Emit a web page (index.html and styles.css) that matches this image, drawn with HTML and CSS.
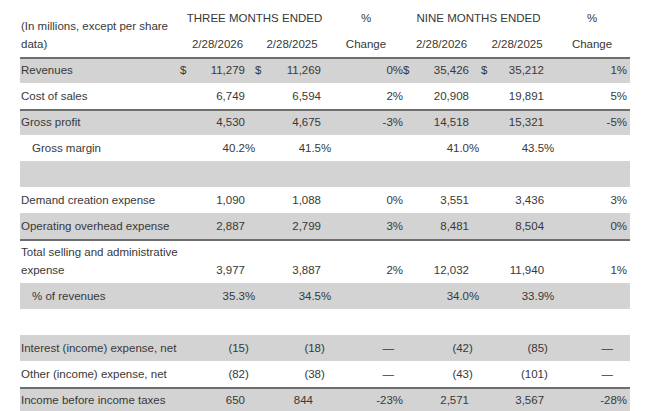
FILE: index.html
```html
<!DOCTYPE html>
<html>
<head>
<meta charset="utf-8">
<link rel="stylesheet" href="styles.css">
</head>
<body>
<table class="fin">
  <colgroup>
    <col class="w-label"><col class="w-t1"><col class="w-t2"><col class="w-c1"><col class="w-n1"><col class="w-n2"><col class="w-c2">
  </colgroup>
  <thead>
    <tr class="h1">
      <th class="lab" rowspan="2">(In millions, except per share data)</th>
      <th colspan="2">THREE MONTHS ENDED</th>
      <th>%</th>
      <th colspan="2">NINE MONTHS ENDED</th>
      <th>%</th>
    </tr>
    <tr class="h2">
      <th>2/28/2026</th>
      <th>2/28/2025</th>
      <th>Change</th>
      <th>2/28/2026</th>
      <th>2/28/2025</th>
      <th>Change</th>
    </tr>
  </thead>
  <tbody>
    <tr class="gray rule">
      <td class="lab">Revenues</td>
      <td class="t1"><span class="cur">$</span>11,279</td>
      <td class="t2"><span class="cur">$</span>11,269</td>
      <td class="c1">0%</td>
      <td class="n1"><span class="cur">$</span>35,426</td>
      <td class="n2"><span class="cur">$</span>35,212</td>
      <td class="c2">1%</td>
    </tr>
    <tr>
      <td class="lab">Cost of sales</td>
      <td class="t1">6,749</td>
      <td class="t2">6,594</td>
      <td class="c1">2%</td>
      <td class="n1">20,908</td>
      <td class="n2">19,891</td>
      <td class="c2">5%</td>
    </tr>
    <tr class="gray rule">
      <td class="lab">Gross profit</td>
      <td class="t1">4,530</td>
      <td class="t2">4,675</td>
      <td class="c1">-3%</td>
      <td class="n1">14,518</td>
      <td class="n2">15,321</td>
      <td class="c2">-5%</td>
    </tr>
    <tr>
      <td class="lab sub">Gross margin</td>
      <td class="t1">40.2<span class="hang">%</span></td>
      <td class="t2">41.5<span class="hang">%</span></td>
      <td class="c1"></td>
      <td class="n1">41.0<span class="hang">%</span></td>
      <td class="n2">43.5<span class="hang">%</span></td>
      <td class="c2"></td>
    </tr>
    <tr class="gray">
      <td class="lab">&nbsp;</td>
      <td class="t1"></td><td class="t2"></td><td class="c1"></td><td class="n1"></td><td class="n2"></td><td class="c2"></td>
    </tr>
    <tr>
      <td class="lab">Demand creation expense</td>
      <td class="t1">1,090</td>
      <td class="t2">1,088</td>
      <td class="c1">0%</td>
      <td class="n1">3,551</td>
      <td class="n2">3,436</td>
      <td class="c2">3%</td>
    </tr>
    <tr class="gray">
      <td class="lab">Operating overhead expense</td>
      <td class="t1">2,887</td>
      <td class="t2">2,799</td>
      <td class="c1">3%</td>
      <td class="n1">8,481</td>
      <td class="n2">8,504</td>
      <td class="c2">0%</td>
    </tr>
    <tr class="rule">
      <td class="lab">Total selling and administrative expense</td>
      <td class="t1">3,977</td>
      <td class="t2">3,887</td>
      <td class="c1">2%</td>
      <td class="n1">12,032</td>
      <td class="n2">11,940</td>
      <td class="c2">1%</td>
    </tr>
    <tr class="gray">
      <td class="lab sub">% of revenues</td>
      <td class="t1">35.3<span class="hang">%</span></td>
      <td class="t2">34.5<span class="hang">%</span></td>
      <td class="c1"></td>
      <td class="n1">34.0<span class="hang">%</span></td>
      <td class="n2">33.9<span class="hang">%</span></td>
      <td class="c2"></td>
    </tr>
    <tr>
      <td class="lab">&nbsp;</td>
      <td class="t1"></td><td class="t2"></td><td class="c1"></td><td class="n1"></td><td class="n2"></td><td class="c2"></td>
    </tr>
    <tr class="gray">
      <td class="lab">Interest (income) expense, net</td>
      <td class="t1">(15<span class="hang">)</span></td>
      <td class="t2">(18<span class="hang">)</span></td>
      <td class="c1 dash">—</td>
      <td class="n1">(42<span class="hang">)</span></td>
      <td class="n2">(85<span class="hang">)</span></td>
      <td class="c2 dash">—</td>
    </tr>
    <tr>
      <td class="lab">Other (income) expense, net</td>
      <td class="t1">(82<span class="hang">)</span></td>
      <td class="t2">(38<span class="hang">)</span></td>
      <td class="c1 dash">—</td>
      <td class="n1">(43<span class="hang">)</span></td>
      <td class="n2">(101<span class="hang">)</span></td>
      <td class="c2 dash">—</td>
    </tr>
    <tr class="gray rule">
      <td class="lab">Income before income taxes</td>
      <td class="t1">650</td>
      <td class="t2 inset">844</td>
      <td class="c1">-23%</td>
      <td class="n1">2,571</td>
      <td class="n2">3,567</td>
      <td class="c2">-28%</td>
    </tr>
  </tbody>
</table>
</body>
</html>
```
FILE: styles.css
```css
html, body {
  margin: 0;
  padding: 0;
  background: #ffffff;
}

body {
  font-family: "Liberation Sans", Arial, sans-serif;
  font-size: 11.5px;
  color: #383838;
}

.fin {
  margin-left: 20px;
  width: 610px;
  table-layout: fixed;
  border-collapse: separate;
  border-spacing: 0;
}

.w-label { width: 160px; }
.w-t1 { width: 75px; }
.w-t2 { width: 74px; }
.w-c1 { width: 74px; }
.w-n1 { width: 77px; }
.w-n2 { width: 74px; }
.w-c2 { width: 76px; }

th, td {
  line-height: 18px;
  padding: 4px 0;
  white-space: nowrap;
  vertical-align: bottom;
}

th {
  font-weight: normal;
  text-align: center;
}

.h1 th {
  padding-top: 9px;
}

.h1 th.lab, td.lab {
  text-align: left;
  white-space: normal;
  padding-left: 1px;
}

.gray td {
  background: #d3d3d3;
}

.rule td {
  border-top: 2px solid #6e6e6e;
  padding-top: 2px;
}

.sub {
  padding-left: 12px !important;
}

.t1, .t2, .c1, .n1, .n2, .c2 {
  text-align: right;
}

.t1 { padding-right: 10px; }
.t2 { padding-right: 8px; }
.c1 { padding-right: 0; }
.n1 { padding-right: 11px; }
.n2 { padding-right: 10px; }
.c2 { padding-right: 3px; }

.t2.inset { padding-right: 16px; }

.c1.dash { padding-right: 9px; }
.c2.dash { padding-right: 17px; }

.cur {
  float: left;
}

.n2 .cur {
  margin-left: 1px;
}

.hang {
  display: inline-block;
  width: 0;
  text-align: left;
}
```
